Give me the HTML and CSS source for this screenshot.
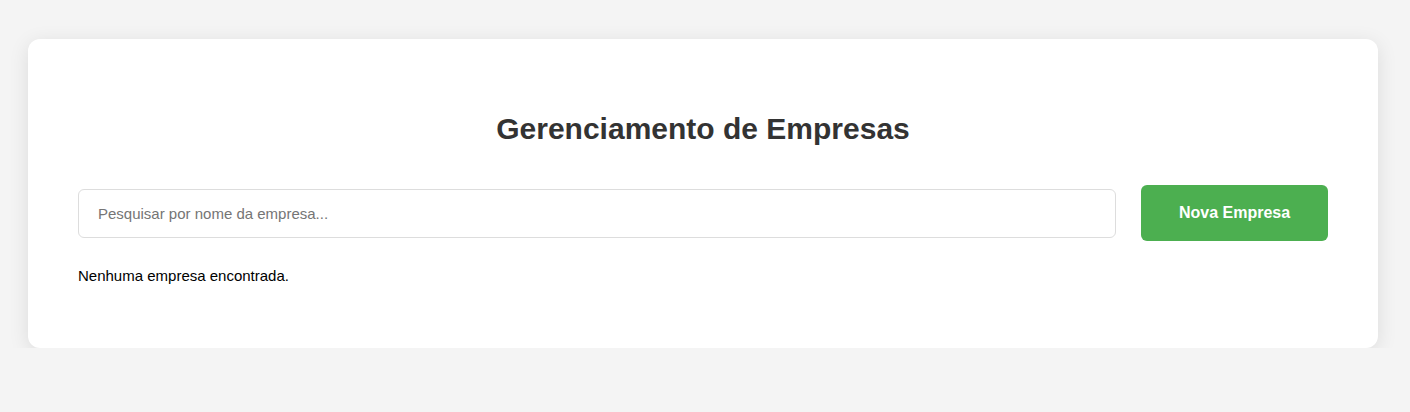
FILE: index.html
```html
<!DOCTYPE html>
<html lang="pt-BR">
<head>
<meta charset="utf-8">
<title>Gerenciamento de Empresas</title>
<link rel="stylesheet" href="styles.css">
</head>
<body>
<main class="card">
  <h1 class="title">Gerenciamento de Empresas</h1>
  <div class="toolbar">
    <input class="search" type="text" placeholder="Pesquisar por nome da empresa...">
    <button class="btn-new" type="button">Nova Empresa</button>
  </div>
  <p class="empty">Nenhuma empresa encontrada.</p>
</main>
</body>
</html>
```
FILE: styles.css
```css
html, body {
  margin: 0;
  padding: 0;
}
body {
  background: #f4f4f4;
  font-family: "Liberation Sans", Arial, sans-serif;
  padding: 39px 0 0 28px;
}
.card {
  box-sizing: border-box;
  width: 1350px;
  background: #fff;
  border-radius: 12px;
  box-shadow: 0 4px 20px rgba(0, 0, 0, 0.1);
  padding: 50px 50px 50px;
  min-height: 309px;
}
.title {
  margin: 23px 0 39px;
  text-align: center;
  font-size: 30px;
  font-weight: bold;
  color: #333;
}
.toolbar {
  display: flex;
  align-items: center;
  gap: 25px;
}
.search {
  flex: 1;
  box-sizing: border-box;
  height: 49px;
  padding: 0 19px;
  border: 1px solid #ddd;
  border-radius: 6px;
  font-family: "Liberation Sans", Arial, sans-serif;
  font-size: 15px;
  color: #333;
  outline: none;
}
.search::placeholder {
  color: #757575;
}
.btn-new {
  box-sizing: border-box;
  width: 187px;
  height: 56px;
  border: none;
  border-radius: 6px;
  background: #4caf50;
  color: #fff;
  font-family: "Liberation Sans", Arial, sans-serif;
  font-size: 16px;
  font-weight: bold;
  cursor: pointer;
}
.empty {
  margin: 26px 0 0;
  font-size: 15px;
  color: #000;
}
```
